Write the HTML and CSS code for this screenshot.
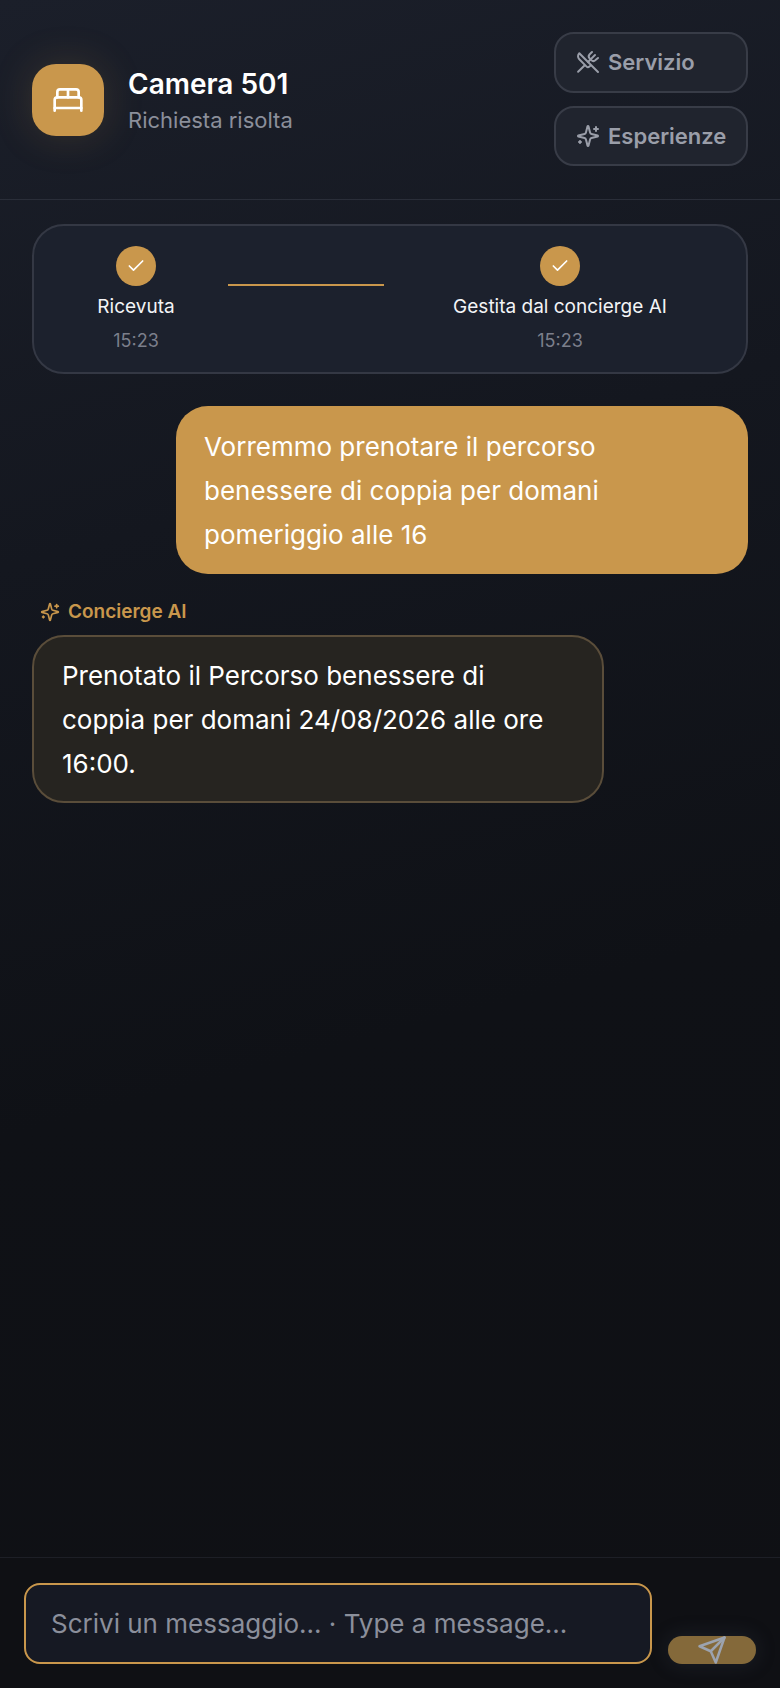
FILE: index.html
```html
<!DOCTYPE html>
<html lang="it">
<head>
<meta charset="utf-8">
<title>Camera 501</title>
<link rel="stylesheet" href="styles.css">
</head>
<body>
<div class="app">
  <header class="header">
    <div class="room">
      <div class="avatar">
        <svg class="icon-bed" viewBox="0 0 24 24"><path d="M2 20v-8a2 2 0 0 1 2-2h16a2 2 0 0 1 2 2v8"/><path d="M4 10V6a2 2 0 0 1 2-2h12a2 2 0 0 1 2 2v4"/><path d="M12 4v6"/><path d="M2 18h20"/></svg>
      </div>
      <div class="room-text">
        <h1 class="room-title">Camera 501</h1>
        <p class="room-status">Richiesta risolta</p>
      </div>
    </div>
    <nav class="actions">
      <button class="action">
        <svg class="icon-action" viewBox="0 0 24 24"><path d="m16 2-2.3 2.3a3 3 0 0 0 0 4.2l1.6 1.6a3 3 0 0 0 4.2 0L22 8"/><path d="M15 15 3.3 3.3a4.2 4.2 0 0 0 0 6l7.3 7.3c.7.7 2 .7 2.8 0L15 15Zm0 0 7 7"/><path d="m2.1 21.8 6.4-6.3"/><path d="m19 5-7 7"/></svg>
        <span>Servizio</span>
      </button>
      <button class="action">
        <svg class="icon-action" viewBox="0 0 24 24"><path d="M9.937 15.5A2 2 0 0 0 8.5 14.063l-6.135-1.582a.5.5 0 0 1 0-.962L8.5 9.936A2 2 0 0 0 9.937 8.5l1.582-6.135a.5.5 0 0 1 .963 0L14.063 8.5A2 2 0 0 0 15.5 9.937l6.135 1.581a.5.5 0 0 1 0 .964L15.5 14.063a2 2 0 0 0-1.437 1.437l-1.582 6.135a.5.5 0 0 1-.963 0z"/><path d="M20 3v4"/><path d="M22 5h-4"/><path d="M4 17v2"/><path d="M5 18H3"/></svg>
        <span>Esperienze</span>
      </button>
    </nav>
  </header>

  <main class="chat">
    <section class="steps">
      <div class="step">
        <span class="step-dot"><svg class="icon-check" viewBox="0 0 24 24"><path d="M20 6 9 17l-5-5"/></svg></span>
        <span class="step-label">Ricevuta</span>
        <span class="step-time">15:23</span>
      </div>
      <div class="step-line"></div>
      <div class="step">
        <span class="step-dot"><svg class="icon-check" viewBox="0 0 24 24"><path d="M20 6 9 17l-5-5"/></svg></span>
        <span class="step-label">Gestita dal concierge AI</span>
        <span class="step-time">15:23</span>
      </div>
    </section>

    <div class="bubble bubble-user">Vorremmo prenotare il percorso benessere di coppia per domani pomeriggio alle 16</div>

    <div class="reply">
      <div class="reply-author">
        <svg class="icon-author" viewBox="0 0 24 24"><path d="M9.937 15.5A2 2 0 0 0 8.5 14.063l-6.135-1.582a.5.5 0 0 1 0-.962L8.5 9.936A2 2 0 0 0 9.937 8.5l1.582-6.135a.5.5 0 0 1 .963 0L14.063 8.5A2 2 0 0 0 15.5 9.937l6.135 1.581a.5.5 0 0 1 0 .964L15.5 14.063a2 2 0 0 0-1.437 1.437l-1.582 6.135a.5.5 0 0 1-.963 0z"/><path d="M20 3v4"/><path d="M22 5h-4"/><path d="M4 17v2"/><path d="M5 18H3"/></svg>
        <span>Concierge AI</span>
      </div>
      <div class="bubble bubble-ai">Prenotato il Percorso benessere di coppia per domani 24/08/2026 alle ore 16:00.</div>
    </div>
  </main>

  <footer class="composer">
    <div class="input">Scrivi un messaggio... · Type a message...</div>
    <button class="send">
      <svg class="icon-send" viewBox="0 0 24 24"><path d="m22 2-7 20-4-9-9-4Z"/><path d="M22 2 11 13"/></svg>
    </button>
  </footer>
</div>
</body>
</html>
```

FILE: styles.css
```css
* { box-sizing: border-box; }

html, body {
  margin: 0;
  padding: 0;
}

body {
  font-family: Inter, "Liberation Sans", sans-serif;
  color: #ffffff;
  background: #0f1014;
}

svg {
  fill: none;
  stroke: currentColor;
  stroke-width: 2;
  stroke-linecap: round;
  stroke-linejoin: round;
  flex: none;
  display: block;
}

.app {
  width: 780px;
  height: 1688px;
  display: flex;
  flex-direction: column;
  background: linear-gradient(165deg, #1b1f2a 0%, #14171f 30%, #0f1116 60%, #0f1014 100%);
}

.header {
  height: 200px;
  flex: none;
  display: flex;
  justify-content: space-between;
  align-items: flex-start;
  padding: 32px 32px 0;
  border-bottom: 1px solid #2a2e39;
}

.room {
  display: flex;
  align-items: center;
  gap: 24px;
  margin-top: 32px;
}

.avatar {
  width: 72px;
  height: 72px;
  border-radius: 24px;
  background: #c9974c;
  display: flex;
  align-items: center;
  justify-content: center;
  box-shadow: 0 0 40px rgba(201, 151, 76, 0.18);
}

.icon-bed { width: 32px; height: 32px; }

.room-title {
  margin: 0;
  font-size: 28px;
  font-weight: 600;
  line-height: 40px;
}

.room-status {
  margin: 0;
  font-size: 22px;
  line-height: 32px;
  color: #8b8f9b;
}

.actions {
  display: flex;
  flex-direction: column;
  gap: 13px;
  width: 194px;
}

.action {
  height: 60.5px;
  display: flex;
  align-items: center;
  gap: 8px;
  padding: 0 20px;
  border: 2px solid #383c47;
  border-radius: 20px;
  background: #20242e;
  color: #9a9ea9;
  font: 600 22px Inter, sans-serif;
}

.icon-action { width: 24px; height: 24px; }

.chat {
  flex: 1;
  display: flex;
  flex-direction: column;
  padding: 24px 32px;
}

.steps {
  height: 150px;
  display: grid;
  grid-template-columns: 172px 156px 340px;
  column-gap: 6px;
  padding: 20px 16px 0;
  border: 2px solid #343844;
  border-radius: 32px;
  background: #1c212d;
}

.step {
  display: flex;
  flex-direction: column;
  align-items: center;
}

.step-dot {
  width: 40px;
  height: 40px;
  border-radius: 50%;
  background: #c9974c;
  display: flex;
  align-items: center;
  justify-content: center;
}

.icon-check { width: 20px; height: 20px; }

.step-label {
  margin-top: 8px;
  font-size: 19px;
  line-height: 26px;
  color: #f3f4f6;
}

.step-time {
  margin-top: 8px;
  font-size: 18px;
  line-height: 26px;
  color: #7b7f8b;
}

.step-line {
  height: 2px;
  margin-top: 38px;
  background: #c9974c;
}

.bubble {
  font-size: 26px;
  line-height: 44px;
  border-radius: 32px;
}

.bubble-user {
  margin-top: 32px;
  align-self: flex-end;
  width: 572px;
  padding: 19px 28px 17px;
  background: #c9974c;
}

.reply {
  margin-top: 24px;
  display: flex;
  flex-direction: column;
  gap: 9px;
}

.reply-author {
  display: flex;
  align-items: center;
  gap: 8px;
  padding-left: 8px;
  font-size: 19px;
  font-weight: 600;
  line-height: 28px;
  color: #c9974c;
}

.icon-author { width: 20px; height: 20px; }

.bubble-ai {
  width: 572px;
  padding: 17px 28px 15px;
  border: 2px solid #5a4d3a;
  background: #262420;
}

.composer {
  height: 131px;
  flex: none;
  display: flex;
  align-items: flex-end;
  gap: 16px;
  padding: 24px;
  border-top: 1px solid #1d1f26;
  background: #0f1014;
}

.input {
  width: 628px;
  height: 81px;
  padding: 0 25px;
  display: flex;
  align-items: center;
  border: 2px solid #c9974c;
  border-radius: 16px;
  background: #161923;
  font-size: 26px;
  color: #8b8f9b;
}

.send {
  width: 88px;
  height: 28px;
  padding: 0;
  display: flex;
  align-items: center;
  justify-content: center;
  border: 0;
  border-radius: 14px;
  background: #84693a;
  color: #9ca3af;
  box-shadow: 0 0 20px rgba(60, 70, 90, 0.3);
}

.icon-send { width: 30px; height: 30px; }
```
